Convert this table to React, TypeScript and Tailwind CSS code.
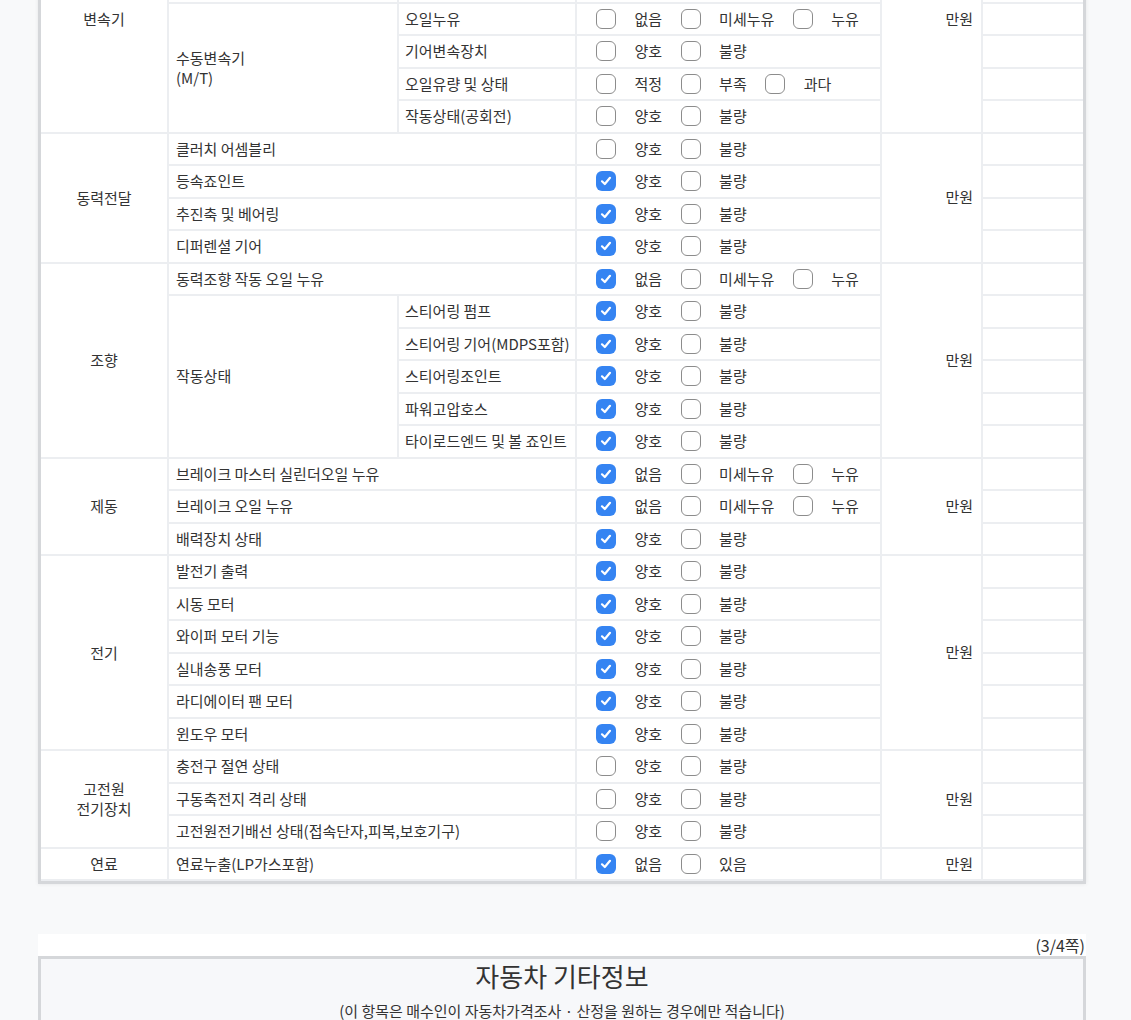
import React from "react";

type Row = {
  label?: string;
  sub?: { text: string[]; span: number };
  item?: string;
  opts: string[];
  checked?: number;
};

type Group = { title: string[]; rows: Row[] };

const LEAK = ["없음", "미세누유", "누유"];
const GOOD = ["양호", "불량"];
const LEVEL = ["적정", "부족", "과다"];

const groups: Group[] = [
  {
    title: ["변속기"],
    rows: [
      { sub: { text: ["자동변속기", "(A/T)"], span: 3 }, item: "오일누유", opts: LEAK },
      { item: "오일유량 및 상태", opts: LEVEL },
      { item: "작동상태(공회전)", opts: GOOD },
      { sub: { text: ["수동변속기", "(M/T)"], span: 4 }, item: "오일누유", opts: LEAK },
      { item: "기어변속장치", opts: GOOD },
      { item: "오일유량 및 상태", opts: LEVEL },
      { item: "작동상태(공회전)", opts: GOOD },
    ],
  },
  {
    title: ["동력전달"],
    rows: [
      { label: "클러치 어셈블리", opts: GOOD },
      { label: "등속죠인트", opts: GOOD, checked: 0 },
      { label: "추진축 및 베어링", opts: GOOD, checked: 0 },
      { label: "디퍼렌셜 기어", opts: GOOD, checked: 0 },
    ],
  },
  {
    title: ["조향"],
    rows: [
      { label: "동력조향 작동 오일 누유", opts: LEAK, checked: 0 },
      { sub: { text: ["작동상태"], span: 5 }, item: "스티어링 펌프", opts: GOOD, checked: 0 },
      { item: "스티어링 기어(MDPS포함)", opts: GOOD, checked: 0 },
      { item: "스티어링조인트", opts: GOOD, checked: 0 },
      { item: "파워고압호스", opts: GOOD, checked: 0 },
      { item: "타이로드엔드 및 볼 죠인트", opts: GOOD, checked: 0 },
    ],
  },
  {
    title: ["제동"],
    rows: [
      { label: "브레이크 마스터 실린더오일 누유", opts: LEAK, checked: 0 },
      { label: "브레이크 오일 누유", opts: LEAK, checked: 0 },
      { label: "배력장치 상태", opts: GOOD, checked: 0 },
    ],
  },
  {
    title: ["전기"],
    rows: [
      { label: "발전기 출력", opts: GOOD, checked: 0 },
      { label: "시동 모터", opts: GOOD, checked: 0 },
      { label: "와이퍼 모터 기능", opts: GOOD, checked: 0 },
      { label: "실내송풍 모터", opts: GOOD, checked: 0 },
      { label: "라디에이터 팬 모터", opts: GOOD, checked: 0 },
      { label: "윈도우 모터", opts: GOOD, checked: 0 },
    ],
  },
  {
    title: ["고전원", "전기장치"],
    rows: [
      { label: "충전구 절연 상태", opts: GOOD },
      { label: "구동축전지 격리 상태", opts: GOOD },
      { label: "고전원전기배선 상태(접속단자,피복,보호기구)", opts: GOOD },
    ],
  },
  {
    title: ["연료"],
    rows: [{ label: "연료누출(LP가스포함)", opts: ["없음", "있음"], checked: 0 }],
  },
];

function Box({ on }: { on: boolean }) {
  if (on) {
    return (
      <span className="flex h-[20px] w-[20px] shrink-0 items-center justify-center rounded-[6px] bg-[#3584f2]">
        <svg width="14" height="14" viewBox="0 0 14 14" fill="none">
          <path d="M3 7.3 L5.8 10 L11 3.8" stroke="white" strokeWidth="2.2" strokeLinecap="round" strokeLinejoin="round" />
        </svg>
      </span>
    );
  }
  return <span className="h-[20px] w-[20px] shrink-0 rounded-[6px] border-[1.5px] border-[#8c8c8c] bg-white" />;
}

const cell = "border-2 border-[#eceef1] p-0 h-[32.5px] align-middle";

export default function App() {
  return (
    <div
      className="min-h-[1020px] overflow-hidden bg-[#f8f9fa] text-[15px] text-[#333]"
      style={{ fontFamily: '"Noto Sans CJK KR", "Noto Sans", sans-serif' }}
    >
      <div className="ml-[38px] mt-[-99px] w-[1048px]">
        <div className="border-[3px] border-[#d5d7da] bg-white shadow-[0_0_4px_rgba(0,0,0,0.08)]">
          <table className="w-full table-fixed border-collapse">
            <colgroup>
              <col className="w-[127px]" />
              <col className="w-[230px]" />
              <col className="w-[178px]" />
              <col className="w-[305px]" />
              <col className="w-[101px]" />
              <col />
            </colgroup>
            <tbody>
              {groups.map((g, gi) =>
                g.rows.map((r, ri) => (
                  <tr key={gi + "-" + ri}>
                    {ri === 0 && (
                      <td rowSpan={g.rows.length} className={cell + " border-l-0 text-center leading-[20px]"}>
                        {g.title.map((t) => (
                          <div key={t}>{t}</div>
                        ))}
                      </td>
                    )}
                    {r.label !== undefined ? (
                      <td colSpan={2} className={cell + " pl-[7px] whitespace-nowrap"}>
                        {r.label}
                      </td>
                    ) : (
                      <>
                        {r.sub && (
                          <td rowSpan={r.sub.span} className={cell + " pl-[7px] leading-[20px]"}>
                            {r.sub.text.map((t) => (
                              <div key={t}>{t}</div>
                            ))}
                          </td>
                        )}
                        <td className={cell + " pl-[6px] whitespace-nowrap"}>{r.item}</td>
                      </>
                    )}
                    <td className={cell}>
                      <div className="flex items-center gap-[18.5px] pl-[19px] whitespace-nowrap">
                        {r.opts.map((o, oi) => (
                          <React.Fragment key={o}>
                            <Box on={r.checked === oi} />
                            <span>{o}</span>
                          </React.Fragment>
                        ))}
                      </div>
                    </td>
                    {ri === 0 && (
                      <td rowSpan={g.rows.length} className={cell + " pr-[8px] text-right"}>
                        만원
                      </td>
                    )}
                    <td className={cell + " border-r-0"}></td>
                  </tr>
                ))
              )}
            </tbody>
          </table>
        </div>

        <div className="mt-[50px] flex h-[22px] items-end justify-end bg-white pr-[1px] text-[16px] leading-[22px]">
          (3/4쪽)
        </div>
        <div className="border-[3px] border-[#d5d7da] bg-[#f7f8fa] text-center">
          <div className="text-[26px] leading-[34px]">자동차 기타정보</div>
          <div className="mt-[8px] text-[15px] leading-[20px]">
            (이 항목은 매수인이 자동차가격조사 · 산정을 원하는 경우에만 적습니다)
          </div>
          <div className="h-[40px]" />
        </div>
      </div>
    </div>
  );
}
